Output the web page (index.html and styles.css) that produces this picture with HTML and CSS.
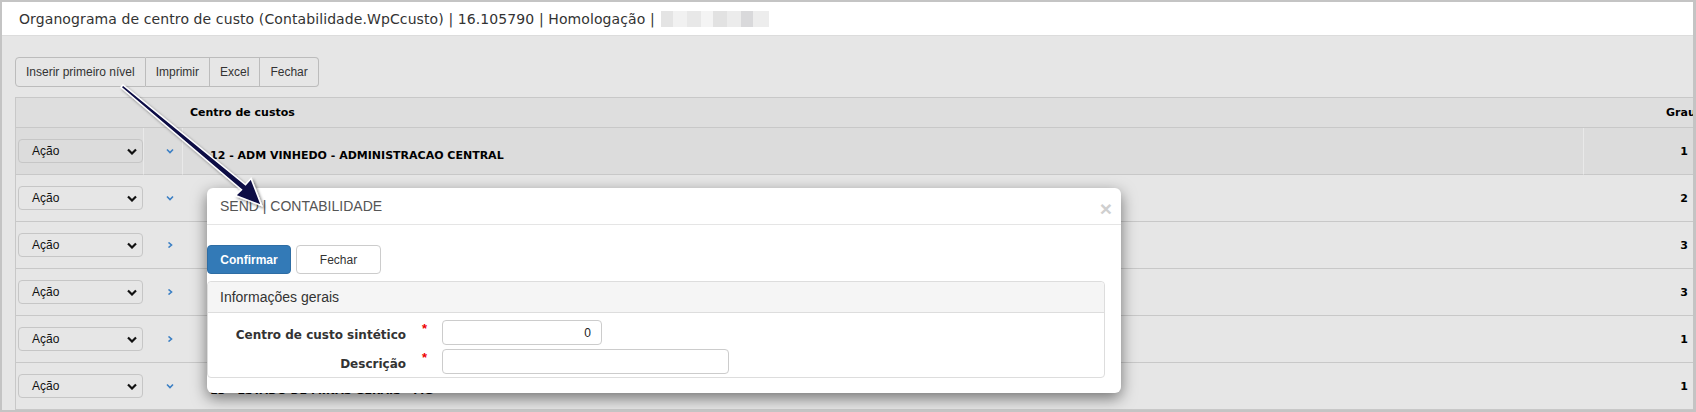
FILE: index.html
```html
<!DOCTYPE html>
<html lang="pt-BR">

<head>
    <meta charset="UTF-8">
    <title>Organograma de centro de custo</title>
    <link rel="stylesheet" href="styles.css">
</head>

<body>

    <div class="screen">

        <!-- barra de título -->
        <div class="titlebar">
            Organograma de centro de custo (Contabilidade.WpCcusto) | 16.105790 | Homologação |
            <span class="blurred"></span>
        </div>

        <div class="content">
            <div class="toolbar">
                <button>Inserir primeiro nível</button>
                <button>Imprimir</button>
                <button>Excel</button>
                <button>Fechar</button>
            </div>

            <table class="grid">
                <colgroup>
                    <col class="col-acao">
                    <col class="col-exp">
                    <col class="col-nome">
                    <col class="col-grau">
                </colgroup>
                <thead>
                    <tr>
                        <th></th>
                        <th></th>
                        <th class="th-nome">Centro de custos</th>
                        <th class="th-grau">Grau</th>
                    </tr>
                </thead>
                <tbody>
                    <tr class="active">
                        <td><div class="acao">Ação<svg viewBox="0 0 10 7"><polyline points="1,1.5 5,5.5 9,1.5" /></svg></div></td>
                        <td><svg class="exp" viewBox="0 0 8 6"><polyline points="1,1.5 4,4.5 7,1.5" /></svg></td>
                        <td class="nome">12 - ADM VINHEDO - ADMINISTRACAO CENTRAL</td>
                        <td class="grau">1</td>
                    </tr>
                    <tr>
                        <td><div class="acao">Ação<svg viewBox="0 0 10 7"><polyline points="1,1.5 5,5.5 9,1.5" /></svg></div></td>
                        <td><svg class="exp" viewBox="0 0 8 6"><polyline points="1,1.5 4,4.5 7,1.5" /></svg></td>
                        <td class="nome">12.01 - ADMINISTRATIVO</td>
                        <td class="grau">2</td>
                    </tr>
                    <tr>
                        <td><div class="acao">Ação<svg viewBox="0 0 10 7"><polyline points="1,1.5 5,5.5 9,1.5" /></svg></div></td>
                        <td><svg class="exp" viewBox="0 0 8 6"><polyline points="2.5,0.5 5.5,3 2.5,5.5" /></svg></td>
                        <td class="nome">12.01.001 - DIRETORIA</td>
                        <td class="grau">3</td>
                    </tr>
                    <tr>
                        <td><div class="acao">Ação<svg viewBox="0 0 10 7"><polyline points="1,1.5 5,5.5 9,1.5" /></svg></div></td>
                        <td><svg class="exp" viewBox="0 0 8 6"><polyline points="2.5,0.5 5.5,3 2.5,5.5" /></svg></td>
                        <td class="nome">12.01.002 - FINANCEIRO</td>
                        <td class="grau">3</td>
                    </tr>
                    <tr>
                        <td><div class="acao">Ação<svg viewBox="0 0 10 7"><polyline points="1,1.5 5,5.5 9,1.5" /></svg></div></td>
                        <td><svg class="exp" viewBox="0 0 8 6"><polyline points="2.5,0.5 5.5,3 2.5,5.5" /></svg></td>
                        <td class="nome">14 - ESTADO DE SAO PAULO - SP</td>
                        <td class="grau">1</td>
                    </tr>
                    <tr>
                        <td><div class="acao">Ação<svg viewBox="0 0 10 7"><polyline points="1,1.5 5,5.5 9,1.5" /></svg></div></td>
                        <td><svg class="exp" viewBox="0 0 8 6"><polyline points="1,1.5 4,4.5 7,1.5" /></svg></td>
                        <td class="nome">13 - ESTADO DE MINAS GERAIS - MG</td>
                        <td class="grau">1</td>
                    </tr>
                </tbody>
            </table>
        </div>

        <!-- janela de inclusão -->
        <div class="modal">
            <div class="modal-header">
                <span class="modal-title">SEND | CONTABILIDADE</span>
                <span class="close">×</span>
            </div>
            <div class="modal-body">
                <div class="actions">
                    <button class="btn btn-primary">Confirmar</button>
                    <button class="btn">Fechar</button>
                </div>
                <div class="panel">
                    <div class="panel-heading">Informações gerais</div>
                    <div class="panel-body">
                        <label>Centro de custo sintético</label>
                        <span class="req">*</span>
                        <input class="inp-num" value="0">
                        <label>Descrição</label>
                        <span class="req">*</span>
                        <input class="inp-desc">
                    </div>
                </div>
            </div>
        </div>

        <!-- seta de destaque -->
        <svg class="pointer" viewBox="0 0 1696 412">
            <defs>
                <filter id="sombra" x="-20%" y="-20%" width="140%" height="140%">
                    <feDropShadow dx="2" dy="2" stdDeviation="1.8" flood-color="#000" flood-opacity="0.45" />
                </filter>
            </defs>
            <polygon filter="url(#sombra)"
                points="121,87.2 241.5,189.8 235.5,195.5 261.5,205.5 251,178.5 245.5,184.8 123,85" />
        </svg>

    </div>

</body>

</html>
```

FILE: styles.css
```css
* {
    box-sizing: border-box;
}

body {
    margin: 0;
    background: #fff;
    font-family: 'Liberation Sans', Arial, sans-serif;
}

.screen {
    position: relative;
    width: 1696px;
    height: 412px;
    overflow: hidden;
    background: #e6e6e6;
    border: 2px solid #c4c4c4;
    border-right-width: 3px;
}

.titlebar {
    height: 34px;
    background: #fff;
    border-bottom: 1px solid #dcdcdc;
    padding-left: 17px;
    display: flex;
    align-items: center;
    font-family: 'DejaVu Sans', Verdana, sans-serif;
    font-size: 14px;
    letter-spacing: 0.1px;
    color: #333;
    white-space: nowrap;
}

.blurred {
    display: inline-block;
    width: 108px;
    height: 16px;
    margin-left: 6px;
    background: linear-gradient(90deg, #e4e4e4 0 12px, #f1f1f1 12px 26px, #e8e8e8 26px 40px, #f4f4f4 40px 52px, #e2e2e2 52px 66px, #ececec 66px 80px, #d9d9db 80px 92px, #ededed 92px 108px);
}

.content {
    padding: 21px 0 0 13px;
}

.toolbar {
    display: flex;
    height: 30px;
}

.toolbar button {
    height: 30px;
    padding: 0 10px;
    border: 1px solid #bcbcbc;
    border-left: none;
    background: #e6e6e6;
    font-family: 'Liberation Sans', Arial, sans-serif;
    font-size: 12px;
    color: #333;
}

.toolbar button:first-child {
    border-left: 1px solid #bcbcbc;
    border-radius: 4px 0 0 4px;
}

.toolbar button:last-child {
    border-radius: 0 4px 4px 0;
}

.grid {
    margin-top: 10px;
    width: 1679px;
    table-layout: fixed;
    border-collapse: separate;
    border-spacing: 0;
    border-top: 1px solid #c8c8c8;
    border-left: 1px solid #c8c8c8;
    font-family: 'DejaVu Sans', Verdana, sans-serif;
    font-size: 11px;
    font-weight: bold;
    color: #000;
}

.col-acao { width: 128px; }
.col-exp { width: 39px; }
.col-grau { width: 110px; }

.grid th {
    height: 30px;
    background: #dedede;
    border-bottom: 1px solid #c8c8c8;
    text-align: left;
    padding: 0;
}

.th-nome {
    padding-left: 7px !important;
}

.th-grau {
    padding-left: 82px !important;
    white-space: nowrap;
    overflow: hidden;
}

.grid td {
    height: 47px;
    padding: 0;
    border-bottom: 1px solid #c8c8c8;
    vertical-align: middle;
}

.grid tr.active td {
    background: #dcdcdc;
    border-right: 1px solid #e9e9e9;
}

.grid tr.active td:last-child {
    border-right: none;
}

.acao {
    position: relative;
    width: 125px;
    height: 24px;
    margin-left: 2px;
    padding-left: 13px;
    border: 1px solid #c6c6c6;
    border-radius: 4px;
    display: flex;
    align-items: center;
    font-family: 'Liberation Sans', Arial, sans-serif;
    font-size: 12px;
    font-weight: normal;
    color: #111;
}

.acao svg {
    position: absolute;
    right: 5px;
    top: 8px;
    width: 10px;
    height: 7px;
    fill: none;
    stroke: #111;
    stroke-width: 2.2;
}

.exp {
    display: block;
    margin-left: 22px;
    width: 8px;
    height: 6px;
    fill: none;
    stroke: #3b7fc4;
    stroke-width: 1.6;
}

.nome {
    padding-left: 27px !important;
    padding-top: 8px !important;
    white-space: nowrap;
    overflow: hidden;
}

.grau {
    text-align: right;
    padding-right: 6px !important;
}

/* modal */

.modal {
    position: absolute;
    left: 205px;
    top: 186px;
    width: 914px;
    height: 205px;
    background: #fff;
    border-radius: 6px;
    box-shadow: 0 5px 15px rgba(0, 0, 0, 0.5);
}

.modal-header {
    height: 37px;
    padding: 0 9px 0 13px;
    border-bottom: 1px solid #e5e5e5;
    display: flex;
    align-items: center;
    justify-content: space-between;
}

.modal-title {
    font-size: 14px;
    color: #555;
}

.close {
    font-size: 21px;
    font-weight: bold;
    color: #cfcfcf;
    line-height: 1;
    margin-top: 4px;
}

.modal-body {
    padding-top: 20px;
}

.actions {
    display: flex;
    gap: 5px;
    height: 29px;
}

.btn {
    height: 29px;
    padding: 0;
    width: 85px;
    background: #fff;
    border: 1px solid #ccc;
    border-radius: 4px;
    font-family: 'Liberation Sans', Arial, sans-serif;
    font-size: 12px;
    color: #333;
}

.btn-primary {
    width: 84px;
    background: #337ab7;
    border-color: #2e6da4;
    color: #fff;
    font-weight: bold;
}

.panel {
    margin-top: 7px;
    width: 898px;
    height: 97px;
    border: 1px solid #ddd;
    border-radius: 4px;
}

.panel-heading {
    height: 31px;
    padding-left: 12px;
    background: #f5f5f5;
    border-bottom: 1px solid #ddd;
    border-radius: 4px 4px 0 0;
    display: flex;
    align-items: center;
    font-size: 14px;
    color: #333;
}

.panel-body {
    display: grid;
    grid-template-columns: 198px 36px auto;
    grid-auto-rows: 25px;
    row-gap: 4px;
    padding-top: 7px;
    align-items: center;
}

.panel-body label {
    text-align: right;
    font-family: 'DejaVu Sans', Verdana, sans-serif;
    font-size: 12px;
    font-weight: bold;
    color: #333;
    padding-top: 5px;
}

.req {
    color: #e00;
    font-size: 13px;
    font-weight: bold;
    padding-left: 16px;
    align-self: start;
    padding-top: 1px;
}

.panel-body input {
    height: 25px;
    border: 1px solid #ccc;
    border-radius: 4px;
    font-family: 'Liberation Sans', Arial, sans-serif;
    font-size: 12px;
    color: #222;
    padding: 0 10px;
}

.inp-num {
    width: 160px;
    text-align: right;
}

.inp-desc {
    width: 287px;
}

.pointer {
    position: absolute;
    left: -2px;
    top: -2px;
    width: 1696px;
    height: 412px;
    pointer-events: none;
}

.pointer polygon {
    fill: #0b0b45;
    stroke: #fff;
    stroke-width: 1.5;
    stroke-linejoin: miter;
}
```
